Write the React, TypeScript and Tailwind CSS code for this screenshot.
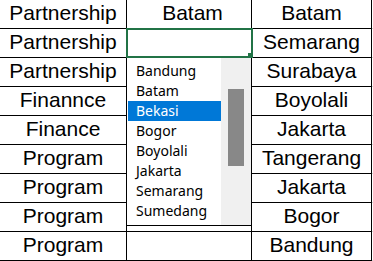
import React from 'react';

const rows: [string, string, string][] = [
  ['Partnership', 'Batam', 'Batam'],
  ['Partnership', '', 'Semarang'],
  ['Partnership', '', 'Surabaya'],
  ['Finannce', '', 'Boyolali'],
  ['Finance', '', 'Jakarta'],
  ['Program', '', 'Tangerang'],
  ['Program', '', 'Jakarta'],
  ['Program', '', 'Bogor'],
  ['Program', '', 'Bandung'],
];

const options = ['Bandung', 'Batam', 'Bekasi', 'Bogor', 'Boyolali', 'Jakarta', 'Semarang', 'Sumedang'];

const App = () => {
  return (
    <div className="relative w-[373px] h-[261px] overflow-hidden bg-white text-black [font-family:'Liberation_Sans',Arial,sans-serif]">
      {/* sheet */}
      {rows.map((row, i) => (
        <div key={i} className="flex h-[29px]">
          <div className="w-[127px] border-r border-b border-black text-center text-[21px] leading-[25px]">
            {row[0]}
          </div>
          <div className="w-[125px] border-r border-b border-black text-center text-[21px] leading-[25px] pl-[7px]">
            {row[1]}
          </div>
          <div className="w-[120px] border-r border-b border-black text-center text-[21px] leading-[25px] whitespace-nowrap">
            {row[2]}
          </div>
          <div className="flex-1 border-b border-[#d4d4d4]" />
        </div>
      ))}

      {/* validation dropdown */}
      <div className="absolute left-[126px] top-[57px] w-[126px] h-[169px] border border-black bg-white flex [font-family:'Noto_Sans','Open_Sans',sans-serif]">
        <div className="w-[94px] pl-[1px] pt-[3px]">
          {options.map((opt) => (
            <div
              key={opt}
              className={`w-[93px] h-[20px] pl-[8px] text-[14px] leading-[20px] ${
                opt === 'Bekasi' ? 'bg-[#0078d7] text-white' : 'text-black'
              }`}
            >
              {opt}
            </div>
          ))}
        </div>
        <div className="w-[30px] h-full bg-[#f0f0f0] pt-[31px] pl-[7px]">
          <div className="w-[16px] h-[77px] bg-[#888888]" />
        </div>
      </div>

      {/* active cell */}
      <div className="absolute left-[126px] top-[28px] w-[127px] h-[30px] border-2 border-[#217346]" />
      <div className="absolute left-[248px] top-[53px] w-[5px] h-[5px] bg-[#217346]" />
    </div>
  );
};

export default App;
